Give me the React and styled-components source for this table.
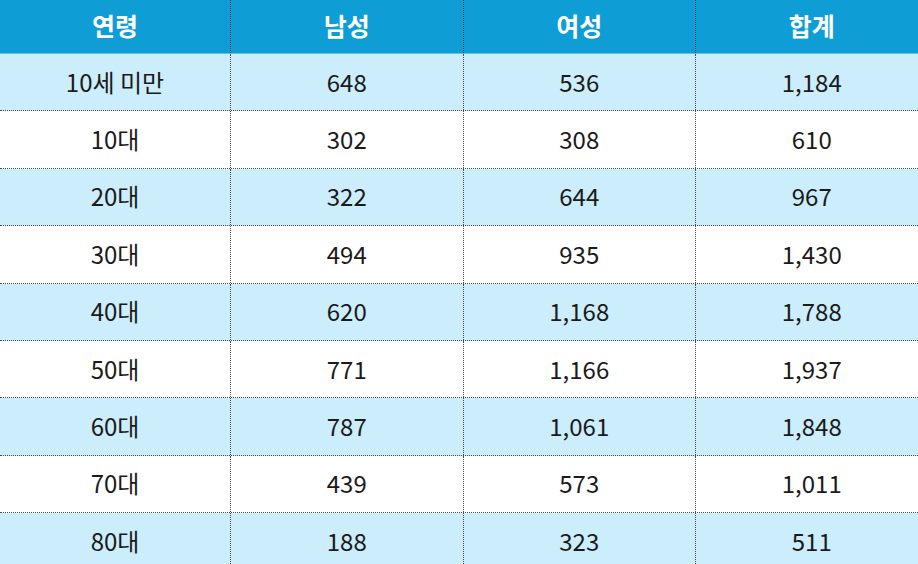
import React from 'react';
import styled, { createGlobalStyle } from 'styled-components';

const GlobalStyle = createGlobalStyle`
  html, body {
    margin: 0;
    padding: 0;
    background: #ffffff;
    overflow: hidden;
  }
  body {
    font-family: 'Noto Sans CJK KR', 'Noto Sans', sans-serif;
  }
`;

const rows = [
  ['10세 미만', '648', '536', '1,184'],
  ['10대', '302', '308', '610'],
  ['20대', '322', '644', '967'],
  ['30대', '494', '935', '1,430'],
  ['40대', '620', '1,168', '1,788'],
  ['50대', '771', '1,166', '1,937'],
  ['60대', '787', '1,061', '1,848'],
  ['70대', '439', '573', '1,011'],
  ['80대', '188', '323', '511'],
];

const columns = '230px 232.5px 232.5px 232.5px';

const Table = styled.div`
  width: 928px;
  display: flex;
  flex-direction: column;
`;

const HeaderRow = styled.div`
  display: grid;
  grid-template-columns: ${columns};
  height: 54px;
  background: #0f9dd6;
  border-bottom: 1px solid #5fc3ec;
  box-sizing: border-box;
`;

const HeaderCell = styled.div`
  display: flex;
  align-items: center;
  justify-content: center;
  color: #ffffff;
  font-size: 25px;
  font-weight: 700;
  padding-bottom: 4px;
  border-left: ${(p) => (p.$first ? 'none' : '1.5px dotted #2f3c46')};
`;

const Row = styled.div`
  display: grid;
  grid-template-columns: ${columns};
  height: 57.4px;
  box-sizing: border-box;
  background: ${(p) => (p.$shaded ? '#ccedfb' : '#ffffff')};
  border-bottom: 1.5px dotted #4a4a4a;
`;

const Cell = styled.div`
  display: flex;
  align-items: center;
  justify-content: center;
  color: #1a1a1a;
  font-size: 24px;
  border-left: ${(p) => (p.$first ? 'none' : '1.5px dotted #4a4a4a')};
  padding-bottom: 2px;
`;

export default function App() {
  return (
    <>
      <GlobalStyle />
      <Table>
        <HeaderRow>
          {['연령', '남성', '여성', '합계'].map((h, i) => (
            <HeaderCell key={h} $first={i === 0}>
              {h}
            </HeaderCell>
          ))}
        </HeaderRow>
        {rows.map((r, ri) => (
          <Row key={r[0]} $shaded={ri % 2 === 0}>
            {r.map((c, ci) => (
              <Cell key={ci} $first={ci === 0}>
                {c}
              </Cell>
            ))}
          </Row>
        ))}
      </Table>
    </>
  );
}
